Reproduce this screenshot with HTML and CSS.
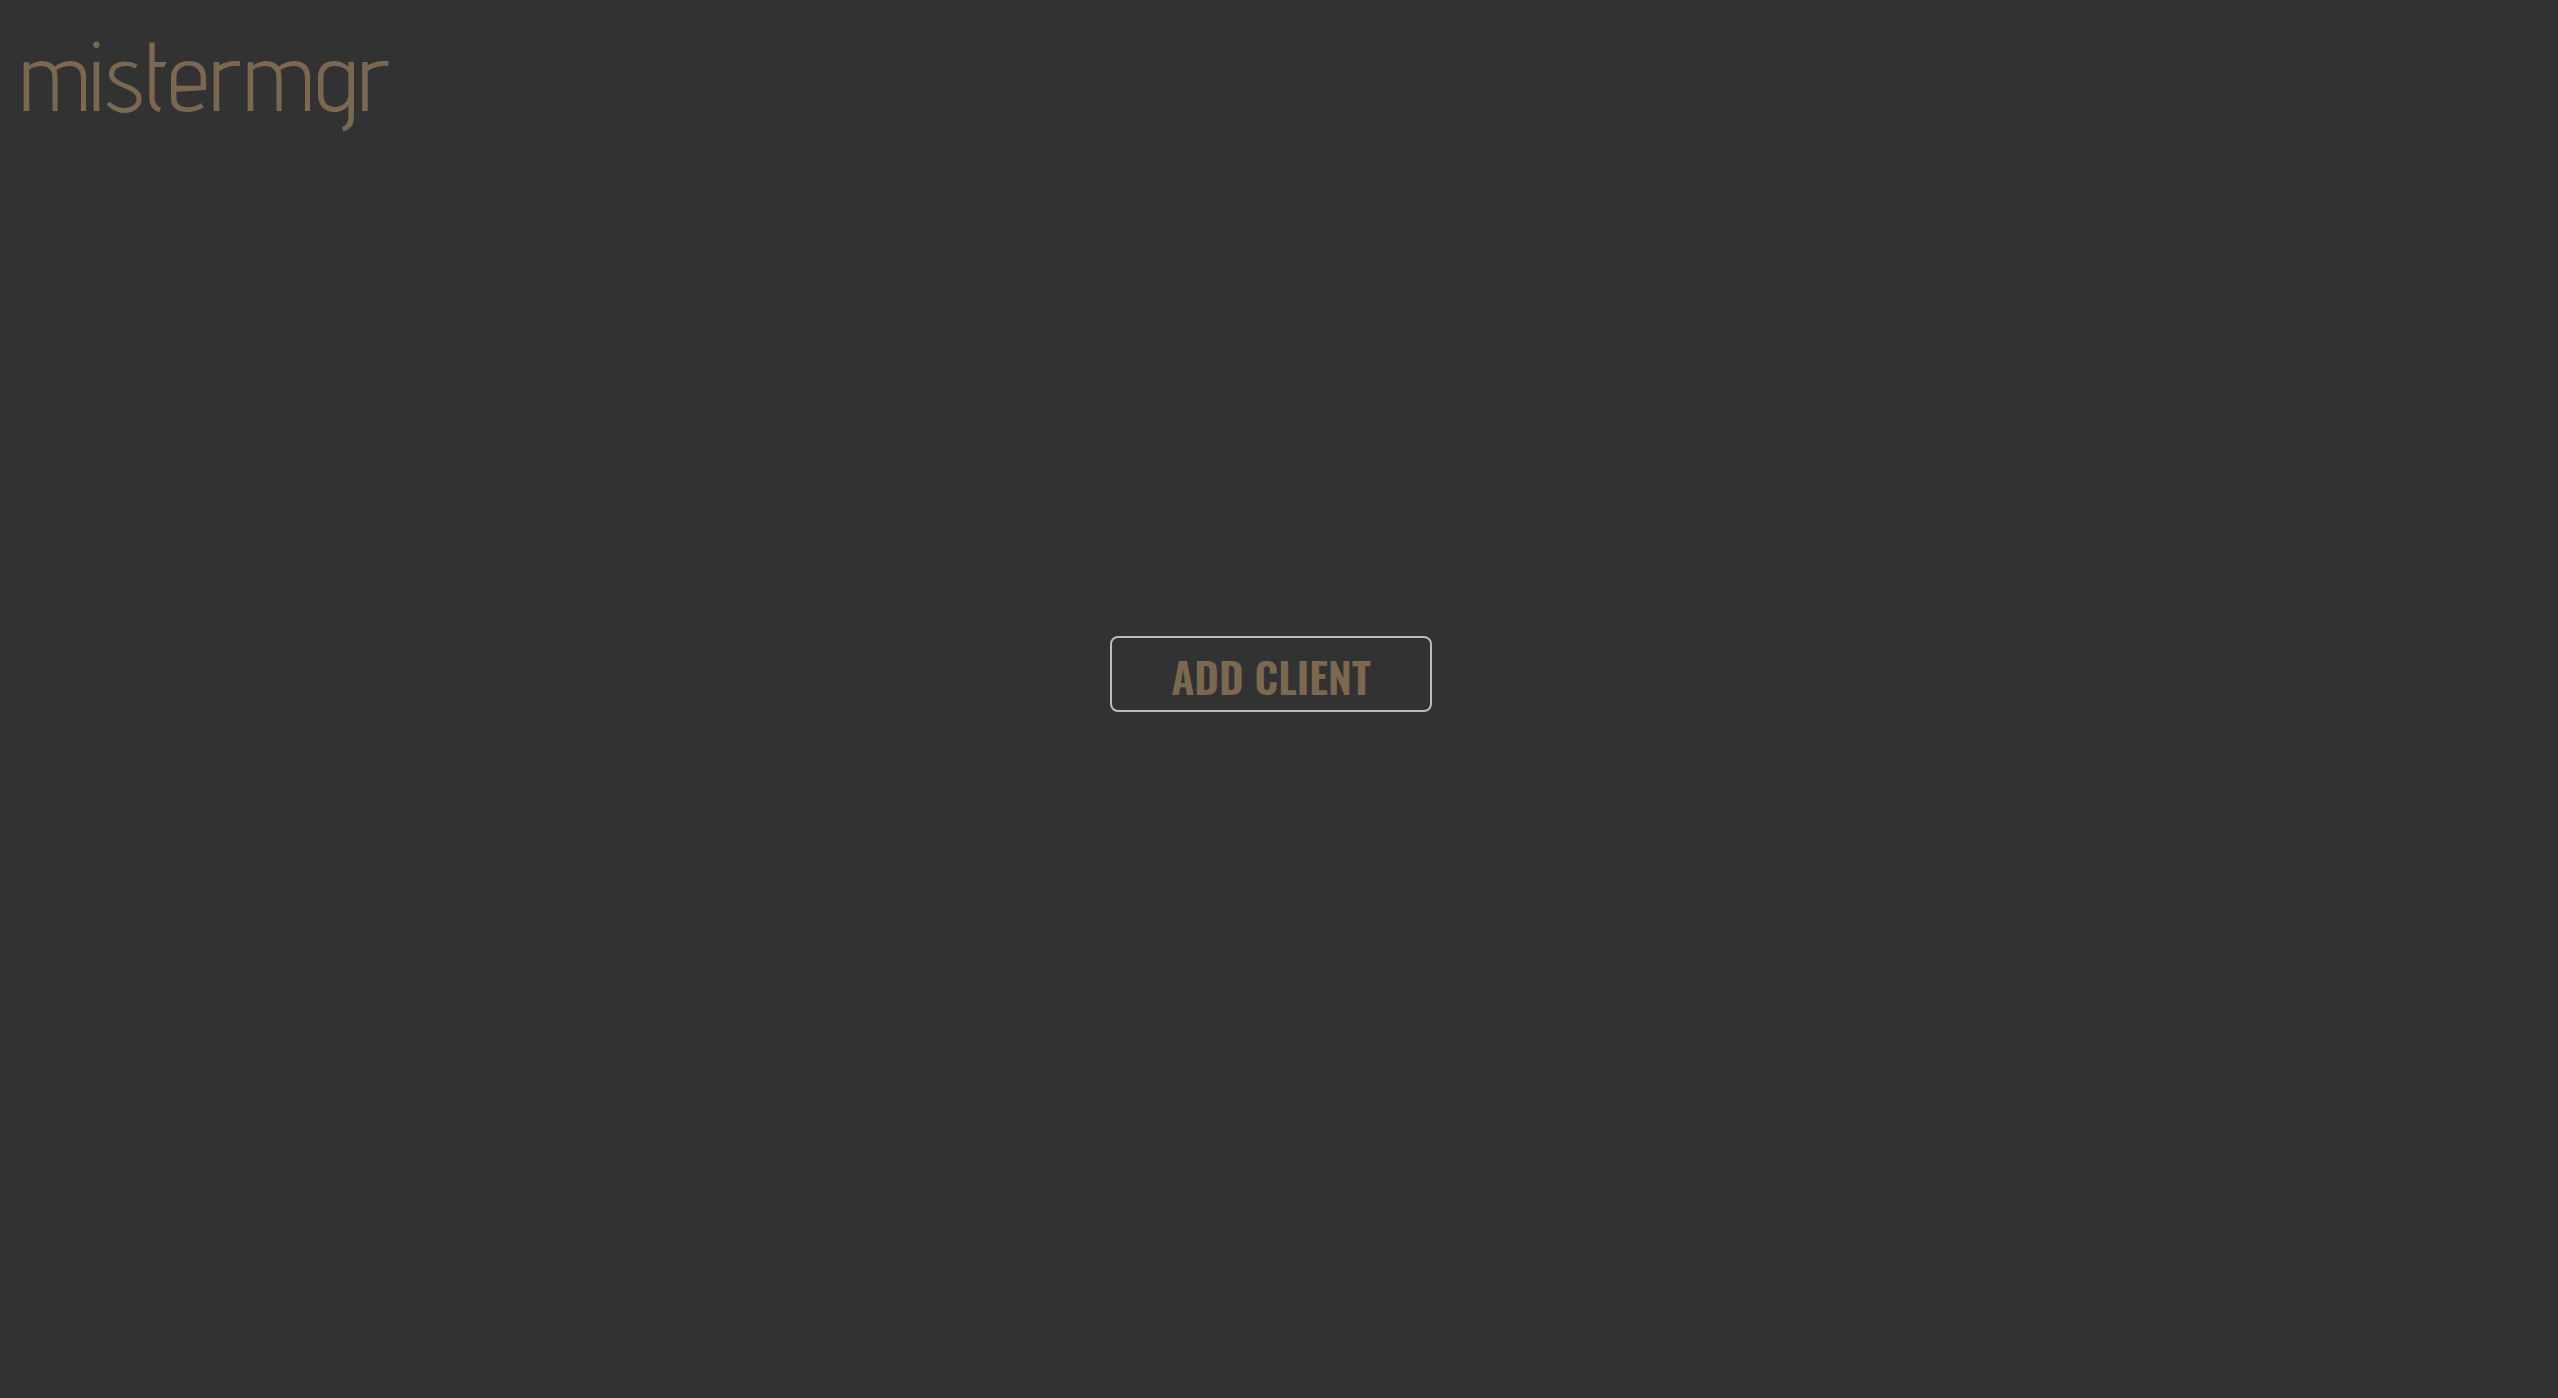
FILE: index.html
```html
<!DOCTYPE html>
<html lang="en">
<head>
<meta charset="utf-8">
<meta name="viewport" content="width=device-width, initial-scale=1">
<title>mistermgr</title>
<link rel="stylesheet" href="styles.css">
</head>
<body>
<header class="header">
  <h1 class="logo">mistermgr</h1>
</header>
<main class="main">
  <button class="add-client" type="button">ADD CLIENT</button>
</main>
</body>
</html>
```
FILE: styles.css
```css
* {
  box-sizing: border-box;
}

body {
  margin: 0;
  min-height: 100vh;
  display: flex;
  flex-direction: column;
  padding-right: 16px;
  background: #323232;
  color: #7b6850;
}

.header {
  padding: 16px 20px 24px;
}

.logo {
  margin: 0;
  font-family: "Advent Pro", "Roboto Condensed", "Liberation Sans", sans-serif;
  font-size: 97px;
  font-weight: 450;
  line-height: 120px;
}

.main {
  flex: 1;
  display: flex;
  align-items: center;
  justify-content: center;
  padding-bottom: 210px;
}

.add-client {
  padding: 6px 59px 2px;
  border: 2px solid #bbb;
  border-radius: 8px;
  background: transparent;
  color: inherit;
  font-family: Oswald, "Roboto Condensed", "Liberation Sans", sans-serif;
  font-size: 43px;
  font-weight: 600;
  line-height: 64px;
  cursor: pointer;
}
```
